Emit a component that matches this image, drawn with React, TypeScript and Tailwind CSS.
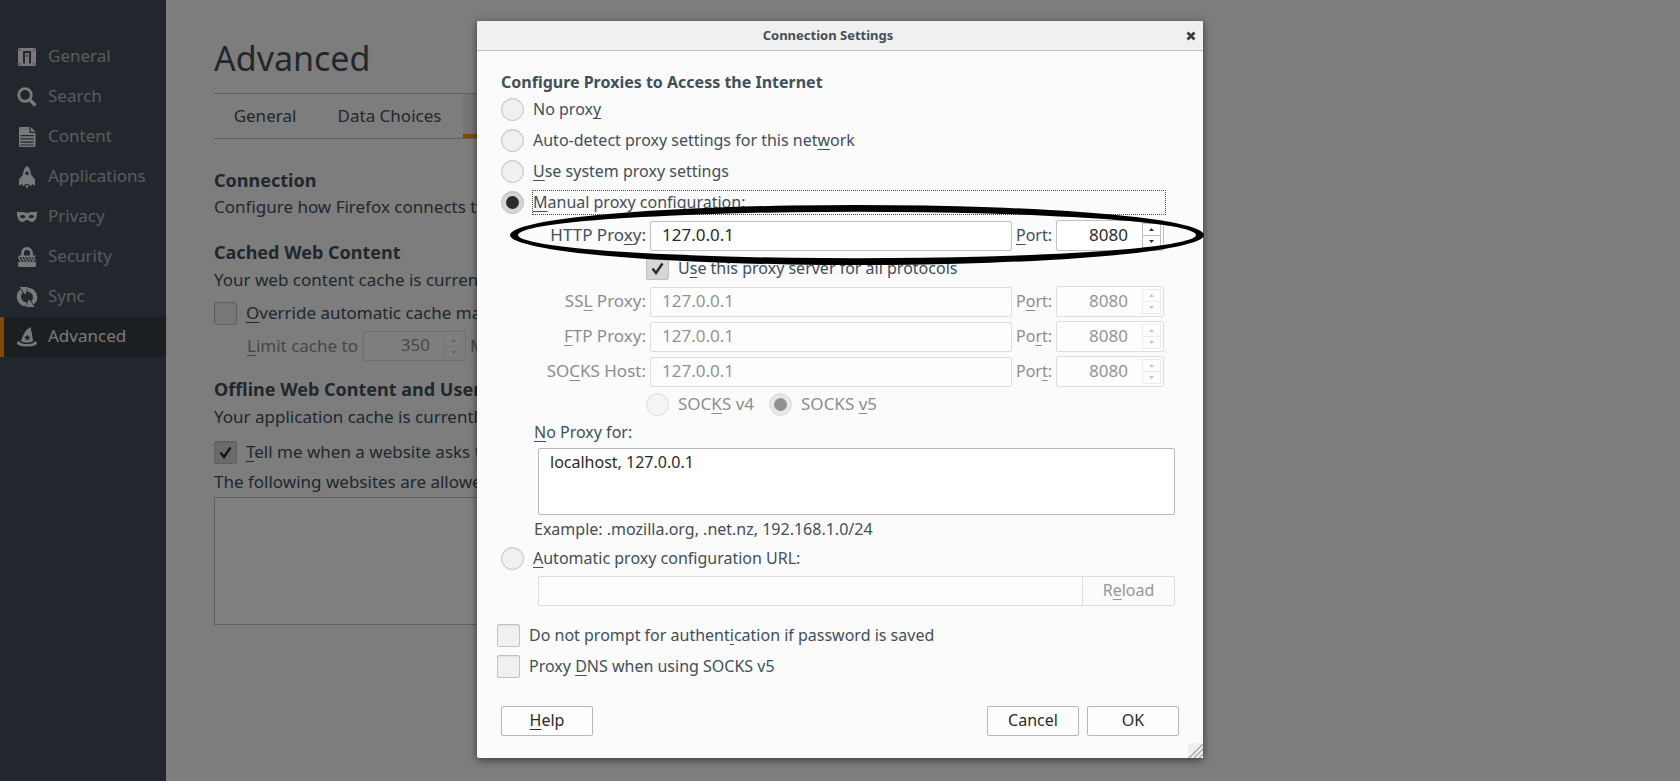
import { useId, useState } from "react";
import type { ReactNode } from "react";

const navItems = ["General", "Search", "Content", "Applications", "Privacy", "Security", "Sync", "Advanced"] as const;

function NavIcon({ name }: { name: (typeof navItems)[number] }) {
  const shapes: Record<string, ReactNode> = {
    General: (
      <>
        <path
          fillRule="evenodd"
          d="M2.500 1h15A1.500 1.500 0 0 1 19 2.500v15a1.500 1.500 0 0 1-1.500 1.500h-15A1.500 1.500 0 0 1 1 17.500v-15A1.500 1.500 0 0 1 2.500 1zM6 4v12.500h8V4zM2.500 2.500v1.200h1.200V2.500zm13.800 0v1.200h1.200V2.500zM2.500 16.300v1.200h1.200v-1.200zm13.800 0v1.200h1.200v-1.200z"
        />
        <path fillRule="evenodd" d="M8 6h4v11H8zM9.400 7.500v2.500h1.200V7.500z" />
      </>
    ),
    Search: (
      <>
        <circle cx="8" cy="8" r="6.300" fill="none" stroke="currentColor" strokeWidth="2.800" />
        <path d="M12.500 12.500l6 6" fill="none" stroke="currentColor" strokeWidth="3.400" />
      </>
    ),
    Content: (
      <path
        fillRule="evenodd"
        d="M3.300 0H12.500v6h6v12.500a1.500 1.500 0 0 1-1.500 1.500H3.500A1.500 1.500 0 0 1 2 18.500V1.300A1.300 1.300 0 0 1 3.300 0zM3.500 8v1.300h13.300V8zm0 3.200v1.300h13.300v-1.300zm0 3.200v1.300h13.300v-1.300zm0 3v1.200h13.300v-1.200zM13.800 0l4.700 4.700h-4.700z"
      />
    ),
    Applications: (
      <>
        <path
          fillRule="evenodd"
          d="M10-1c2.600 1.800 3.900 4.800 4 8.600l4 5V19l-2.500-2-2 2.200-1.500-2H8l-1.500 2-2-2.200L2 19v-6.400l4-5C6.100 3.800 7.400.8 10-1zm0 5.400a1.800 1.800 0 1 0 0 3.600 1.800 1.800 0 0 0 0-3.600z"
        />
        <path d="M8 18.500h4l-2 3z" />
      </>
    ),
    Privacy: (
      <path
        fillRule="evenodd"
        d="M0 4.500c2.200.9 3.800.4 5.600.4C7.600 4.900 8.800 5.800 10 5.800s2.400-.9 4.400-.9c1.800 0 3.400.5 5.600-.4.200 3-.2 5.700-1.500 8-1.100 1.900-3.300 2.900-5.300 2.100-1.500-.6-2-1.900-3.200-1.900s-1.700 1.300-3.200 1.900c-2 .8-4.200-.2-5.300-2.100C.2 10.200-.2 7.500 0 4.500zM2.800 9.200c.6 1.500 1.900 2.100 3.200 2 1.300-.1 2.300-.7 2.500-1.300-.6-1.400-1.800-2-3.100-1.900-1.100 0-2 .4-2.600 1.200zm8.700.7c.2.600 1.200 1.200 2.500 1.300 1.300.1 2.600-.5 3.200-2-.6-.8-1.500-1.200-2.600-1.200-1.300-.1-2.500.5-3.100 1.900z"
      />
    ),
    Security: (
      <>
        <path d="M5.500 9V6a4.500 4.500 0 0 1 9 0v3" fill="none" stroke="currentColor" strokeWidth="2.800" />
        <path d="M1.500 8.500h17V10h-17zM1 15h18v3.500a1.500 1.500 0 0 1-1.500 1.500h-15A1.500 1.500 0 0 1 1 18.500z" />
        <path
          d="M1.500 10l3 5M4.500 10l3 5M7.500 10l3 5M10.500 10l3 5M13.500 10l3 5M16 10l2.500 4"
          fill="none"
          stroke="currentColor"
          strokeWidth="1.400"
        />
      </>
    ),
    Sync: (
      <>
        <path d="M9.500 17.200A7.400 7.400 0 0 1 4.500 4.200" fill="none" stroke="currentColor" strokeWidth="4.200" />
        <path d="M2.500 0h8.300L8.300 7.800z" />
        <path d="M10.500 2.800A7.400 7.400 0 0 1 15.500 15.800" fill="none" stroke="currentColor" strokeWidth="4.200" />
        <path d="M17.500 20H9.200l2.500-7.800z" />
      </>
    ),
    Advanced: (
      <>
        <path
          fillRule="evenodd"
          d="M14.500 0c-.9 1.500-.8 2.800 0 4.500l1.600 9.500c-3.600 2-8.800 2-12.300 0C5.500 10.500 7 6 9 3.600 10.500 2 12.500.8 14.500 0zM10.300 7.500l-.9 2.100-2.300.2 1.700 1.500-.5 2.200 2-1.200 2 1.200-.5-2.200 1.700-1.500-2.300-.2z"
        />
        <path d="M2.500 14c-1.200.3-2.500 1-2.500 2C0 18 4.500 19.500 10 19.500S20 18 20 16c0-1-1.300-1.700-2.500-2 .6 1.800-3.200 3-7.500 3s-8.100-1.200-7.500-3z" />
      </>
    ),
  };
  return (
    <svg viewBox="0 0 20 20" className="h-5 w-5 shrink-0 overflow-visible fill-current text-[#f2f2f2]" aria-hidden="true">
      {shapes[name]}
    </svg>
  );
}

/** Underlines the access key inside a label. */
function Key({ children }: { children: ReactNode }) {
  return <u className="decoration-1 underline-offset-3 [text-decoration-skip-ink:none]">{children}</u>;
}

function Radio({
  name,
  defaultChecked,
  disabled,
  focused,
  children,
}: {
  name: string;
  defaultChecked?: boolean;
  disabled?: boolean;
  focused?: boolean;
  children: ReactNode;
}) {
  return (
    <label className={`flex h-[31px] items-center gap-2 ${disabled ? "text-[17px] text-[#8b8e90]" : ""}`}>
      <input
        type="radio"
        name={name}
        defaultChecked={defaultChecked}
        disabled={disabled}
        className="grid h-[23px] w-[23px] shrink-0 appearance-none place-items-center rounded-full border border-[#c1c1c1] bg-[#f0f0f0] shadow-[inset_0_1px_1px_rgba(0,0,0,0.06)] checked:bg-[#d6d6d6] checked:before:h-[13px] checked:before:w-[13px] checked:before:rounded-full checked:before:bg-[#2b2b2b] disabled:opacity-50"
      />
      <span
        className={
          focused
            ? "mr-[13px] h-[25px] flex-1 border border-dotted border-[#424f5a] leading-[22px]"
            : "border border-transparent pb-[2px] leading-[22px]"
        }
      >
        {children}
      </span>
    </label>
  );
}

function Checkbox({ defaultChecked, children }: { defaultChecked?: boolean; children: ReactNode }) {
  return (
    <label className="flex h-[31px] items-center gap-[9px]">
      <span className="grid h-[23px] w-[23px] shrink-0">
        <input
          type="checkbox"
          defaultChecked={defaultChecked}
          className="peer col-start-1 row-start-1 h-[23px] w-[23px] appearance-none rounded-xs border border-[#c1c1c1] bg-[#f0f0f0] shadow-[inset_0_1px_1px_rgba(0,0,0,0.06)] checked:bg-[#d6d6d6]"
        />
        <svg
          viewBox="0 0 23 23"
          className="pointer-events-none col-start-1 row-start-1 hidden h-[23px] w-[23px] peer-checked:block"
          aria-hidden="true"
        >
          <path d="M6.500 11.500l3.500 4.500 6.500-9.500" fill="none" stroke="#2b2b2b" strokeWidth="2.400" />
        </svg>
      </span>
      <span className="pb-[2px] whitespace-nowrap">{children}</span>
    </label>
  );
}

function Spinner({ id, value, disabled, wide }: { id: string; value: number; disabled?: boolean; wide?: boolean }) {
  const [current, setCurrent] = useState(String(value));
  const step = (by: number) => setCurrent(String(Number(current) + by));
  const button = "grid h-[13px] w-[19px] place-items-center border border-[#c1c1c1]";
  return (
    <div
      className={`flex items-center rounded-xs border border-[#c1c1c1] bg-white pr-[2px] ${wide ? "h-[31px] w-[108px]" : "h-[30px] w-[103px]"} ${disabled ? "opacity-50" : ""}`}
    >
      <input
        id={id}
        type="text"
        inputMode="numeric"
        value={current}
        disabled={disabled}
        onChange={(e) => setCurrent(e.target.value)}
        className="w-full min-w-0 flex-1 bg-transparent pr-[14px] pb-[2px] text-right text-[17px] text-[#2b2b2b] outline-none"
      />
      <span className={`flex flex-col ${disabled ? "opacity-50" : ""}`}>
        <button type="button" aria-label="Increase" disabled={disabled} onClick={() => step(1)} className={button}>
          <svg viewBox="0 0 5 3" className="h-[3px] w-[5px] fill-[#2b2b2b]" aria-hidden="true">
            <path d="M0 3l2.500-3L5 3z" />
          </svg>
        </button>
        <button type="button" aria-label="Decrease" disabled={disabled} onClick={() => step(-1)} className={`-mt-px ${button}`}>
          <svg viewBox="0 0 5 3" className="h-[3px] w-[5px] fill-[#2b2b2b]" aria-hidden="true">
            <path d="M0 0l2.500 3L5 0z" />
          </svg>
        </button>
      </span>
    </div>
  );
}

function ProxyRow({ label, portLabel, disabled }: { label: ReactNode; portLabel: ReactNode; disabled?: boolean }) {
  const id = useId();
  return (
    <div className={`flex items-end gap-1 pr-[15px] text-[17px] ${disabled ? "text-[#8b8e90]" : ""}`}>
      <label htmlFor={`${id}host`} className="w-[145px] shrink-0 self-center pb-[2px] text-right whitespace-nowrap">
        {label}
      </label>
      <input
        id={`${id}host`}
        type="text"
        defaultValue="127.0.0.1"
        disabled={disabled}
        className="h-[30px] min-w-0 flex-1 rounded-xs border border-[#c1c1c1] bg-white px-[11px] pb-1 text-[#2b2b2b] outline-none disabled:opacity-50"
      />
      <label htmlFor={`${id}port`} className="w-9 shrink-0 self-center pb-[2px] text-[16px] whitespace-nowrap">
        {portLabel}
      </label>
      <Spinner id={`${id}port`} value={8080} disabled={disabled} wide />
    </div>
  );
}

function Preferences() {
  const id = useId();
  return (
    <div className="flex min-h-screen bg-[#fbfbfb] text-[17px]">
      <nav className="w-[166px] shrink-0 bg-[#454f5d] pt-[37px]">
        {navItems.map((item) => (
          <a
            key={item}
            href={`#${item.toLowerCase()}`}
            className={`flex h-10 items-center gap-[11px] border-l-4 pl-[13px] ${
              item === "Advanced" ? "border-[#ff9500] bg-[#363f45] text-[#f2f2f2]" : "border-transparent text-[#b4b6b9]"
            }`}
          >
            <NavIcon name={item} />
            <span className="pb-[2px]">{item}</span>
          </a>
        ))}
      </nav>
      <main className="max-w-[980px] flex-1 px-12 pt-[34px]">
        <h1 className="text-[34px] leading-[48px]">Advanced</h1>
        <div className="mt-[11px] flex h-[46px] border-y border-[#c1c1c1]">
          <button type="button" className="w-[102px] text-center">General</button>
          <button type="button" className="w-[147px] text-center">Data Choices</button>
          <button type="button" className="w-[102px] border-b-4 border-[#ff9500] bg-[#ebebeb] text-center">Network</button>
          <button type="button" className="px-5">Update</button>
          <button type="button" className="px-5">Certificates</button>
        </div>
        <h2 className="mt-[29px] text-[18px] leading-6 font-bold">Connection</h2>
        <p className="mt-[3px]">Configure how Firefox connects to the Internet</p>
        <h2 className="mt-[21px] text-[18px] leading-6 font-bold">Cached Web Content</h2>
        <p className="mt-1">Your web content cache is currently using 2.6 MB of disk space</p>
        <div className="mt-[6px]">
          <Checkbox>
            <Key>O</Key>verride automatic cache management
          </Checkbox>
        </div>
        <div className="mt-[2px] flex items-center gap-1 pl-[33px] text-[#8b8e90]">
          <label htmlFor={id} className="w-[112px] whitespace-nowrap">
            <Key>L</Key>imit cache to
          </label>
          <Spinner id={id} value={350} disabled />
          <span>MB of space</span>
        </div>
        <h2 className="mt-4 text-[18px] leading-6 font-bold">Offline Web Content and User Data</h2>
        <p className="mt-1">Your application cache is currently using 0 bytes of disk space</p>
        <div className="mt-2">
          <Checkbox defaultChecked>
            <Key>T</Key>ell me when a website asks to store data for offline use
          </Checkbox>
        </div>
        <p className="mt-[2px]">The following websites are allowed to store data for offline use:</p>
        <div className="mt-[3px] h-32 border border-[#c1c1c1] bg-white" />
      </main>
    </div>
  );
}

function ConnectionDialog() {
  const id = useId();
  const push = "h-[30px] w-[92px] rounded-xs border border-[#b8b8b8] bg-[#fdfdfd] pb-[2px] text-[#2b2b2b]";
  return (
    <section
      role="dialog"
      aria-labelledby={`${id}title`}
      className="relative w-[726px] rounded-xs bg-[#fbfbfb] shadow-[0_2px_8px_rgba(0,0,0,0.55)]"
    >
      <header className="flex h-[30px] items-center rounded-t-xs border-b border-[#c1c1c1] bg-[#f0f0f0]">
        <h2 id={`${id}title`} className="flex-1 pb-[2px] text-center text-[13px] leading-5 font-bold">
          Connection Settings
        </h2>
        <button type="button" aria-label="Close" className="grid h-6 w-6 place-items-center">
          <svg viewBox="0 0 10 10" className="h-[10px] w-[10px]" aria-hidden="true">
            <path d="M1.500 1.500l7 7M8.500 1.500l-7 7" stroke="#3b3b3b" strokeWidth="2.600" />
          </svg>
        </button>
      </header>
      <form className="px-6 pt-[19px] pb-[22px]" onSubmit={(e) => e.preventDefault()}>
        <h3 className="font-bold">Configure Proxies to Access the Internet</h3>
        <Radio name="proxy">
          No prox<Key>y</Key>
        </Radio>
        <Radio name="proxy">
          Auto-detect proxy settings for this net<Key>w</Key>ork
        </Radio>
        <Radio name="proxy">
          <Key>U</Key>se system proxy settings
        </Radio>
        <Radio name="proxy" defaultChecked focused>
          <Key>M</Key>anual proxy configuration:
        </Radio>
        <div className="mt-[2px] flex flex-col gap-[2px]">
          <ProxyRow label={<>HTTP Pro<Key>x</Key>y:</>} portLabel={<><Key>P</Key>ort:</>} />
          <div className="pl-[145px]">
            <Checkbox defaultChecked>
              U<Key>s</Key>e this proxy server for all protocols
            </Checkbox>
          </div>
          <div className="flex flex-col gap-1">
            <ProxyRow disabled label={<>SS<Key>L</Key> Proxy:</>} portLabel={<>P<Key>o</Key>rt:</>} />
            <ProxyRow disabled label={<><Key>F</Key>TP Proxy:</>} portLabel={<>Po<Key>r</Key>t:</>} />
            <ProxyRow disabled label={<>SO<Key>C</Key>KS Host:</>} portLabel={<>Por<Key>t</Key>:</>} />
          </div>
          <div className="flex gap-[14px] pl-[145px]">
            <Radio name="socks" disabled>
              SOC<Key>K</Key>S v4
            </Radio>
            <Radio name="socks" disabled defaultChecked>
              SOCKS <Key>v</Key>5
            </Radio>
          </div>
        </div>
        <div className="pl-[33px]">
          <label htmlFor={`${id}none`} className="block">
            <Key>N</Key>o Proxy for:
          </label>
          <div className="mt-1 px-1">
            <textarea
              id={`${id}none`}
              defaultValue="localhost, 127.0.0.1"
              className="block h-[67px] w-full resize-none rounded-xs border border-[#b8b8b8] bg-white px-[11px] py-px text-[#2b2b2b] outline-none"
            />
          </div>
          <p className="mt-[2px]">Example: .mozilla.org, .net.nz, 192.168.1.0/24</p>
        </div>
        <div className="mt-[2px]">
          <Radio name="proxy">
            <Key>A</Key>utomatic proxy configuration URL:
          </Radio>
        </div>
        <div className="mt-[2px] flex pr-1 pl-[37px]">
          <input
            type="text"
            aria-label="Automatic proxy configuration URL"
            disabled
            className="h-[30px] min-w-0 flex-1 rounded-l-xs border border-r-0 border-[#dcdcdc] bg-[#fdfdfd] px-[11px]"
          />
          <button type="button" disabled className="h-[30px] w-[93px] rounded-r-xs border border-[#dcdcdc] pb-[2px] text-[#969696]">
            R<Key>e</Key>load
          </button>
        </div>
        <div className="-ml-1 pt-[14px]">
          <Checkbox>
            Do not prompt for authent<Key>i</Key>cation if password is saved
          </Checkbox>
          <Checkbox>
            Proxy <Key>D</Key>NS when using SOCKS v5
          </Checkbox>
        </div>
        <div className="mt-6 flex gap-2">
          <button type="button" className={`mr-auto ${push}`}>
            <Key>H</Key>elp
          </button>
          <button type="button" className={push}>Cancel</button>
          <button type="submit" className={push}>OK</button>
        </div>
      </form>
      <svg viewBox="0 0 15 15" className="absolute right-0 bottom-0 h-[15px] w-[15px]" aria-hidden="true">
        <path d="M0 0h15v15H0z" fill="#f0f0f0" />
        <path d="M1 15L15 1M6 15l9-9M11 15l4-4" stroke="#a8a8a8" strokeWidth="1.400" />
      </svg>
      <svg
        viewBox="0 0 694 60"
        className="pointer-events-none absolute top-[184px] left-[33px] h-[60px] w-[694px]"
        aria-hidden="true"
      >
        <path
          fillRule="evenodd"
          d="M0 30a347 30 0 0 1 694 0a347 30 0 0 1-694 0zM8 30a339 23.300 0 0 0 678 0a339 23.300 0 0 0-678 0z"
        />
      </svg>
    </section>
  );
}

export default function App() {
  return (
    <div className="relative min-h-screen overflow-hidden font-['Noto_Sans',sans-serif] text-[16px] leading-6 text-[#424f5a]">
      <Preferences />
      <div className="absolute inset-0 flex items-start justify-center bg-black/50 py-[21px]">
        <ConnectionDialog />
      </div>
    </div>
  );
}
